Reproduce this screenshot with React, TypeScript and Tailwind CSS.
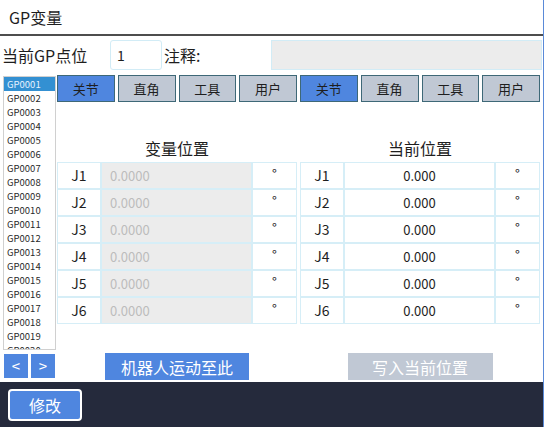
import { useState } from "react";

const FONT = { fontFamily: '"Noto Sans CJK SC", "Noto Sans", sans-serif' };

const points = Array.from({ length: 20 }, (_, i) => `GP${String(i + 1).padStart(4, "0")}`);
const joints = ["J1", "J2", "J3", "J4", "J5", "J6"];
const modes = ["关节", "直角", "工具", "用户"];

const Tab = ({ label, active }: { label: string; active: boolean }) => (
  <button
    className={`h-[27px] border border-[#3e6877] text-[13px] text-[#1e1e1e] ${
      active ? "bg-[#4f86df]" : "bg-[#c0c8d4]"
    }`}
  >
    {label}
  </button>
);

const JointTable = ({ value, editable }: { value: string; editable: boolean }) => (
  <div className="flex flex-col">
    {joints.map((j) => (
      <div key={j} className="grid h-[27px] grid-cols-[44px_151px_45px]">
        <div className="flex items-center justify-center border border-[#d6eef7] text-[14px] text-[#1e1e1e]">
          {j}
        </div>
        <div
          className={`flex items-center border border-[#d6eef7] text-[13px] ${
            editable ? "bg-[#ececec] pl-[8px] text-[#bcbcbc]" : "justify-center text-[#1e1e1e]"
          }`}
        >
          {value}
        </div>
        <div className="flex items-center justify-center border border-[#d6eef7] pb-[4px] text-[13px] text-[#1e1e1e]">
          °
        </div>
      </div>
    ))}
  </div>
);

export default function App() {
  const [selected, setSelected] = useState(0);

  return (
    <div
      className="flex h-[427px] w-[544px] flex-col overflow-hidden border-r border-[#5a8ad8] bg-white text-[#1e1e1e]"
      style={FONT}
    >
      <div className="flex h-[34px] items-center pl-[9px] text-[16px]">GP变量</div>
      <div className="h-[2px] bg-[#4d4d4d]" />

      <div className="mt-[4px] flex h-[30px] items-center text-[16px]">
        <span className="ml-[2px] w-[108px]">当前GP点位</span>
        <div className="flex h-[30px] w-[52px] items-center rounded-[3px] border border-[#d2ecf6] pl-[6px] text-[14px]">
          1
        </div>
        <span className="ml-[2px] w-[107px]">注释:</span>
        <div className="h-[30px] w-[271px] border border-[#d2ecf6] bg-[#ececec]" />
      </div>

      <div className="flex flex-1">
        <div className="ml-[3px] mt-[6px] flex w-[53px] flex-col">
          <div className="h-[274px] overflow-hidden border border-[#d0d0d0] bg-white">
            {points.map((p, i) => (
              <div
                key={p}
                onClick={() => setSelected(i)}
                className={`flex h-[14px] items-center pl-[3px] text-[9.5px] ${
                  i === selected ? "bg-[#3390d2] text-[#e6f2ff]" : "text-[#2a2a2a]"
                }`}
              >
                {p}
              </div>
            ))}
          </div>
          <div className="ml-[1px] mt-[4px] flex gap-[3px]">
            <button className="h-[24px] w-[24px] bg-[#4f86df] text-[15px] text-white">&lt;</button>
            <button className="h-[24px] w-[24px] bg-[#4f86df] text-[15px] text-white">&gt;</button>
          </div>
        </div>

        <div className="ml-[1px] mt-[5px] flex w-[483px] flex-col">
          <div className="grid grid-cols-8 gap-[3px]">
            {[...modes, ...modes].map((m, i) => (
              <Tab key={i} label={m} active={i % 4 === 0} />
            ))}
          </div>

          <div className="mt-[34px] grid grid-cols-[240px_240px] gap-[3px]">
            <div className="flex flex-col items-center">
              <div className="flex h-[24px] w-full items-center justify-center text-[16px]">变量位置</div>
              <div className="mt-[2px] w-full">
                <JointTable value="0.0000" editable />
              </div>
              <button className="mt-[29px] h-[27px] w-[144px] bg-[#4f86df] text-[16px] text-white">
                机器人运动至此
              </button>
            </div>
            <div className="flex flex-col items-center">
              <div className="flex h-[24px] w-full items-center justify-center text-[16px]">当前位置</div>
              <div className="mt-[2px] w-full">
                <JointTable value="0.000" editable={false} />
              </div>
              <button className="mt-[29px] h-[27px] w-[145px] bg-[#c0c8d4] text-[16px] text-white">
                写入当前位置
              </button>
            </div>
          </div>
        </div>
      </div>

      <div className="flex h-[45px] items-center bg-[#252a3c] pl-[8px]">
        <button className="h-[32px] w-[74px] rounded-[4px] border-2 border-white bg-[#4f86df] text-[16px] text-white">
          修改
        </button>
      </div>
    </div>
  );
}
